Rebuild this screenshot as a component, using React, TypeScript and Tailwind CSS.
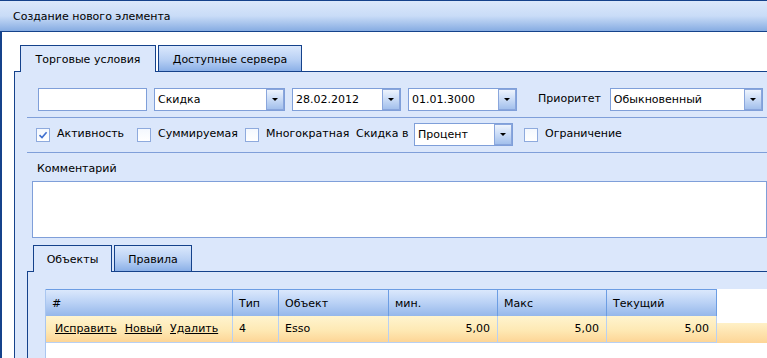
import React from "react";

const FONT = "font-['DejaVu_Sans',Tahoma,sans-serif]";

function Arrow() {
  return (
    <div className="flex h-full w-[18px] shrink-0 items-center justify-center border border-[#8aa6dc] bg-[linear-gradient(#eef4fd,#c9dbf6_50%,#a3c0ec)]">
      <div className="h-0 w-0 border-x-[3px] border-t-[3px] border-x-transparent border-t-black" />
    </div>
  );
}

function Combo({ w, text, button = true }: { w: string; text: string; button?: boolean }) {
  return (
    <div className={`${w} flex h-[23px] shrink-0 items-center border border-[#7f9fd9] bg-white`}>
      <span className="flex-1 truncate pl-[3px] leading-[21px]">{text}</span>
      {button && <Arrow />}
    </div>
  );
}

function Check({ checked, label, w }: { checked?: boolean; label: string; w: string }) {
  return (
    <div className={`${w} flex shrink-0 items-center`}>
      <div className="flex h-[14px] w-[14px] items-center justify-center border border-[#8eaadd] bg-[linear-gradient(#f4f8fe,#ffffff)]">
        {checked && (
          <svg width="10" height="10" viewBox="0 0 10 10">
            <path d="M1.5 5.2 L4 7.6 L8.6 2.2" fill="none" stroke="#3f6fcf" strokeWidth="1.6" />
          </svg>
        )}
      </div>
      <span className="ml-[7px]">{label}</span>
    </div>
  );
}

function Tab({ label, active, w }: { label: string; active?: boolean; w: string }) {
  return (
    <div
      className={`${w} flex items-center justify-center border border-b-0 border-[#15428b] pt-[3px] ${
        active
          ? "relative z-10 -mb-px h-[27px] bg-[#dbe7fb]"
          : "h-[26px] bg-[linear-gradient(#dbe8fc,#b8d0f4_55%,#8bb0e7)]"
      }`}
    >
      {label}
    </div>
  );
}

const cols = [
  { name: "#", w: "w-[187px]" },
  { name: "Тип", w: "w-[46px]" },
  { name: "Объект", w: "w-[110px]" },
  { name: "мин.", w: "w-[109px]" },
  { name: "Макс", w: "w-[109px]" },
  { name: "Текущий", w: "w-[110px]" },
];

const rowCell = "flex items-center border-b border-r border-[#b8d0f3] bg-[linear-gradient(#fff4cf,#fee9b4_55%,#fdd596)]";

export default function App() {
  return (
    <div className={`${FONT} flex h-[358px] w-[767px] flex-col overflow-hidden bg-white text-[11px] text-black`}>
      {/* title */}
      <div className="flex h-[32px] shrink-0 items-center border-y border-[#15428b] bg-[linear-gradient(#dbe8fb,#c9dcf7_50%,#86ace2)] pl-[13px] pt-[2px]">
        Создание нового элемента
      </div>

      <div className="flex flex-1 flex-col border-l-2 border-[#15428b] pl-[12px] pt-[13px]">
        {/* outer tabs */}
        <div className="flex gap-[2px] pl-[6px]">
          <Tab label="Торговые условия" active w="w-[136px]" />
          <Tab label="Доступные сервера" w="w-[144px]" />
        </div>

        <div className="flex flex-1 flex-col border-l border-t border-[#15428b] bg-[#dbe7fb] pl-[12px]">
          {/* row 1 */}
          <div className="flex items-center border-b border-[#7f9fd9] pb-[6px] pl-[11px] pt-[16px]">
            <Combo w="w-[109px]" text="" button={false} />
            <div className="ml-[7px]" />
            <Combo w="w-[131px]" text="Скидка" />
            <div className="ml-[7px]" />
            <Combo w="w-[109px]" text="28.02.2012" />
            <div className="ml-[7px]" />
            <Combo w="w-[109px]" text="01.01.3000" />
            <span className="ml-[21px] mr-[9px]">Приоритет</span>
            <Combo w="w-[153px]" text="Обыкновенный" />
          </div>

          {/* row 2 */}
          <div className="flex items-center border-b border-[#7f9fd9] pb-[6px] pl-[9px] pt-[5px]">
            <Check checked label="Активность" w="w-[101px]" />
            <Check label="Суммируемая" w="w-[108px]" />
            <Check label="Многократная" w="w-[111px]" />
            <span className="w-[58px] shrink-0">Скидка в</span>
            <Combo w="w-[99px]" text="Процент" />
            <div className="ml-[11px]" />
            <Check label="Ограничение" w="w-[120px]" />
          </div>

          {/* comment */}
          <div className="pl-[10px] pt-[9px] leading-[14px]">Комментарий</div>
          <div className="ml-[5px] mt-[5px] h-[57px] shrink-0 border border-[#7f9fd9] bg-white" />

          {/* inner tabs */}
          <div className="mt-[7px] flex gap-[2px] pl-[6px]">
            <Tab label="Объекты" active w="w-[79px]" />
            <Tab label="Правила" w="w-[78px]" />
          </div>

          <div className="flex flex-1 flex-col border-l border-t border-[#15428b] bg-[#dbe7fb] pl-[17px] pt-[17px]">
            <div className="flex flex-1 flex-col border-l border-[#a9c6f0] bg-white">
              {/* header */}
              <div className="flex h-[27px] shrink-0">
                {cols.map((c) => (
                  <div
                    key={c.name}
                    className={`${c.w} flex items-center border-r border-t border-[#6c9de3] bg-[linear-gradient(#dbe8fc,#b9d1f5_50%,#95b7ea)] pl-[6px] pt-[2px]`}
                  >
                    {c.name}
                  </div>
                ))}
                <div className="flex-1 bg-white" />
              </div>

              {/* row */}
              <div className="flex h-[27px] shrink-0">
                <div className={`${rowCell} w-[187px] gap-[8px] pl-[9px]`}>
                  <span className="underline">Исправить</span>
                  <span className="underline">Новый</span>
                  <span className="underline">Удалить</span>
                </div>
                <div className={`${rowCell} w-[46px] pl-[6px]`}>4</div>
                <div className={`${rowCell} w-[110px] pl-[6px]`}>Esso</div>
                <div className={`${rowCell} w-[109px] justify-end pr-[7px]`}>5,00</div>
                <div className={`${rowCell} w-[109px] justify-end pr-[7px]`}>5,00</div>
                <div className={`${rowCell} w-[110px] justify-end pr-[7px]`}>5,00</div>
                <div className="flex flex-1 flex-col">
                  <div className="h-[7px] bg-white" />
                  <div className="flex-1 bg-[linear-gradient(#fff1c7,#fdd596)]" />
                </div>
              </div>
            </div>
          </div>
        </div>
      </div>
    </div>
  );
}
